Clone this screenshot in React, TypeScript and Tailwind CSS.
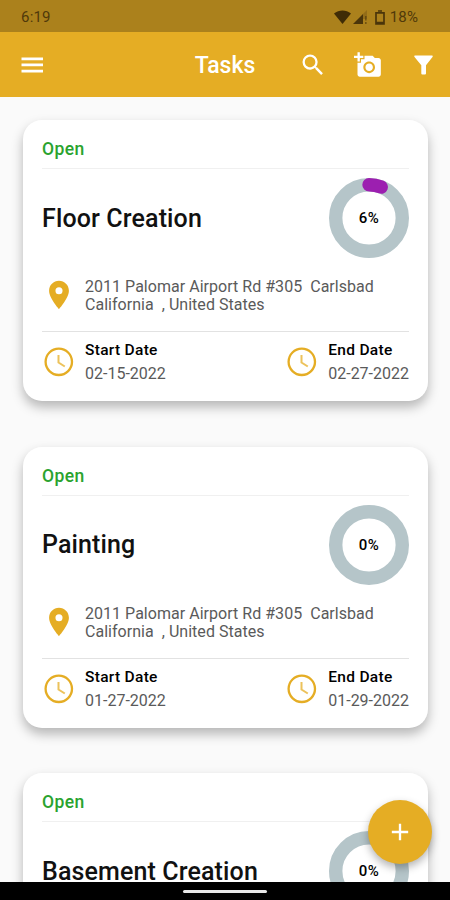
import { MdAdd, MdAddAPhoto, MdLocationOn, MdSearch } from "react-icons/md";

type Task = {
  title: string;
  status: string;
  progress: number;
  start: string;
  end: string;
};

const tasks: Task[] = [
  { title: "Floor Creation", status: "Open", progress: 6, start: "02-15-2022", end: "02-27-2022" },
  { title: "Painting", status: "Open", progress: 0, start: "01-27-2022", end: "01-29-2022" },
  { title: "Basement Creation", status: "Open", progress: 0, start: "01-27-2022", end: "01-29-2022" },
];

function StatusBar() {
  return (
    <div className="flex h-8 shrink-0 items-center justify-between bg-[#ab811c] pt-0.5 pr-8 pl-[21px] text-[15px] text-[#50390a]">
      <span className="tracking-[0.2px]">6:19</span>
      <div className="flex items-center">
        <svg width="17" height="14" viewBox="0 0 17 14" fill="#3f2c06">
          <path d="M0 3.5C5 -.6 12 -.6 17 3.5L8.5 14z" />
        </svg>
        <svg className="ml-[2px]" width="15" height="14" viewBox="0 0 15 14" fill="#4a350a">
          <path d="M0 14L10 4v10z" />
          <path d="M10 4l4-4v9h-4z" opacity=".25" />
          <path d="M12 12h1.6v2H12zM12 6h1.6v4.5H12z" opacity=".6" />
        </svg>
        <svg className="ml-[7px]" width="10" height="15" viewBox="0 0 10 15" fill="none" stroke="#4a350a" strokeWidth="1.7">
          <path d="M1 2.8h8v11H1z" />
          <path d="M3 1h4M1 12.5h8" />
        </svg>
        <span className="ml-[5px] tracking-[0.1px]">18%</span>
      </div>
    </div>
  );
}

function Header() {
  return (
    <header className="grid h-[65px] shrink-0 grid-cols-[1fr_auto_1fr] items-center bg-[#e5ad24] text-white">
      <svg className="ml-[21px]" width="22" height="16" viewBox="0 0 22 16" fill="currentColor">
        <path d="M.5 .5H22v2.7H.5zM.5 6.6H22v2.7H.5zM.5 12.7H22v2.7H.5z" />
      </svg>
      <h1 className="pt-[3px] text-[23px] font-medium">Tasks</h1>
      <div className="flex items-center justify-end pr-[17px]">
        <MdSearch size={28} />
        <MdAddAPhoto className="ml-[27px]" size={28} />
        <svg className="ml-[32px]" width="19" height="20" viewBox="0 0 19 20" fill="currentColor">
          <path d="M1 .5h17q1 0 .7 1.2l-6.7 8.6v8.2q0 1-1 1H8.300q-1 0-1-1v-8.200L.300 1.700Q0 .5 1 .5z" />
        </svg>
      </div>
    </header>
  );
}

function ProgressRing({ value }: { value: number }) {
  const length = 2 * Math.PI * 33.3;
  return (
    <div className="grid size-20 place-items-center">
      <svg className="col-start-1 row-start-1 -rotate-90" width="80" height="80" fill="none" strokeWidth="13.4">
        <circle cx="40" cy="40" r="33.3" stroke="#b5c5c9" />
        {value > 0 && (
          <circle
            cx="40"
            cy="40"
            r="33.3"
            stroke="#9c1fb0"
            strokeLinecap="round"
            strokeDasharray={`${(length * value) / 100} ${length}`}
          />
        )}
      </svg>
      <span className="col-start-1 row-start-1 pt-px text-[15px] font-medium tracking-[0.5px] text-black">{value}%</span>
    </div>
  );
}

function ClockIcon() {
  return (
    <svg className="mr-[11px] ml-[2px] text-[#e5ad24]" width="30" height="30" viewBox="0 0 30 30" fill="none" stroke="currentColor">
      <circle cx="14.8" cy="14.8" r="13.2" strokeWidth="2.3" />
      <path d="M14.500 8v7.500l6.300 4" strokeWidth="2" opacity=".75" />
    </svg>
  );
}

function DateItem({ label, date }: { label: string; date: string }) {
  return (
    <div className="flex items-center">
      <ClockIcon />
      <div>
        <p className="h-[23px] text-[15.5px] leading-[23px] font-medium tracking-[0.3px] text-black">{label}</p>
        <p className="h-[23px] text-[16px] leading-[23px] text-[#5a5a5a]">{date}</p>
      </div>
    </div>
  );
}

function TaskCard({ task }: { task: Task }) {
  return (
    <article className="h-[281px] shrink-0 rounded-[19px] bg-white px-[19px] shadow-[0_6px_12px_rgba(0,0,0,0.28)]">
      <div className="h-[49px] border-b border-[#f0f0f0] pt-[17px] text-[17.5px] leading-6 font-medium tracking-[0.4px] text-[#2aa32e]">
        {task.status}
      </div>
      <div className="flex h-[98px] items-center justify-between">
        <h2 className="pt-px text-[25px] font-medium tracking-[0.13px] text-[#111]">{task.title}</h2>
        <ProgressRing value={task.progress} />
      </div>
      <div className="flex h-[65px] items-start border-b border-[#e2e2e2]">
        <MdLocationOn className="mt-[11px] mr-[9px] text-[#e5ad24]" size={34} />
        <p className="pt-[11px] text-[16px] leading-[18px] tracking-[0.03px] whitespace-pre text-[#5a5a5a]">
          {"2011 Palomar Airport Rd #305  Carlsbad\nCalifornia  , United States"}
        </p>
      </div>
      <div className="flex justify-between pt-[7px]">
        <DateItem label="Start Date" date={task.start} />
        <DateItem label="End Date" date={task.end} />
      </div>
    </article>
  );
}

export default function App() {
  return (
    <div className="relative flex h-[900px] w-[450px] flex-col overflow-hidden bg-[#fafafa] font-[Roboto,sans-serif]">
      <StatusBar />
      <Header />
      <main className="flex min-h-0 flex-1 flex-col gap-[45.5px] overflow-hidden pt-[23px] pr-[22px] pl-[23px]">
        {tasks.map((task) => (
          <TaskCard key={task.title} task={task} />
        ))}
      </main>
      <button className="absolute right-[18px] bottom-[36px] flex size-16 items-center justify-center rounded-full bg-[#e5ad24] text-white shadow-[0_4px_8px_rgba(0,0,0,0.3)]">
        <MdAdd size={28} />
      </button>
      <div className="flex h-[18px] shrink-0 justify-center bg-black pt-[8px]">
        <div className="h-[3px] w-[84px] rounded-full bg-[#e8e8e8]" />
      </div>
    </div>
  );
}
